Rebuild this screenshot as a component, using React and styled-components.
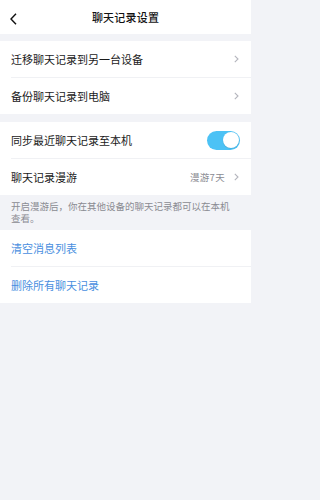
import styled, { createGlobalStyle } from "styled-components";

const GlobalStyle = createGlobalStyle`
  html, body {
    margin: 0;
    padding: 0;
    background: #f2f3f7;
    font-family: "Noto Sans CJK SC", "Noto Sans", sans-serif;
  }
`;

const sections = [
  {
    gap: 7,
    rows: [
      { label: "迁移聊天记录到另一台设备", arrow: true },
      { label: "备份聊天记录到电脑", arrow: true },
    ],
  },
  {
    gap: 8,
    rows: [
      { label: "同步最近聊天记录至本机", toggle: true },
      { label: "聊天记录漫游", value: "漫游7天", arrow: true },
    ],
    note: "开启漫游后，你在其他设备的聊天记录都可以在本机查看。",
  },
  {
    gap: 0,
    rows: [
      { label: "清空消息列表", link: true },
      { label: "删除所有聊天记录", link: true },
    ],
  },
];

function Chevron() {
  return (
    <Arrow width="5" height="8" viewBox="0 0 5 8">
      <path d="M0.8 0.8 L4 4 L0.8 7.2" fill="none" stroke="#b4b5bd" strokeWidth="1.1" />
    </Arrow>
  );
}

export default function App() {
  return (
    <>
      <GlobalStyle />
      <Page>
        <Header>
          <BackButton width="7" height="12" viewBox="0 0 7 12">
            <path d="M6 0.8 L1 6 L6 11.2" fill="none" stroke="#111" strokeWidth="1.4" />
          </BackButton>
          <Title>聊天记录设置</Title>
        </Header>

        {sections.map((section, i) => (
          <Section key={i} $gap={section.gap}>
            <Group>
              {section.rows.map((row) => (
                <Row key={row.label}>
                  <Label $link={row.link}>{row.label}</Label>
                  <Right>
                    {row.value && <Value>{row.value}</Value>}
                    {row.arrow && <Chevron />}
                    {row.toggle && (
                      <Toggle>
                        <Knob />
                      </Toggle>
                    )}
                  </Right>
                </Row>
              ))}
            </Group>
            {section.note && <Note>{section.note}</Note>}
          </Section>
        ))}
      </Page>
    </>
  );
}

const Page = styled.div`
  width: 251px;
  min-height: 500px;
  background: #f2f3f7;
`;

const Header = styled.div`
  height: 34px;
  background: #fff;
  display: flex;
  align-items: center;
  justify-content: center;
  position: relative;
`;

// back arrow sits over the centred title bar
const BackButton = styled.svg`
  position: absolute;
  left: 10px;
  top: 13px;
`;

const Title = styled.div`
  font-size: 11px;
  font-weight: 500;
  color: #111;
  letter-spacing: 0.2px;
`;

const Section = styled.div`
  padding-top: ${(p) => p.$gap}px;
`;

const Group = styled.div`
  background: #fff;
`;

const Row = styled.div`
  height: 36px;
  display: flex;
  align-items: center;
  justify-content: space-between;
  margin-left: 11px;
  padding-right: 11px;
  & + & {
    border-top: 1px solid #f0f1f4;
  }
`;

const Label = styled.span`
  font-size: 11px;
  color: ${(p) => (p.$link ? "#4a8fe0" : "#1a1a1a")};
`;

const Right = styled.div`
  display: flex;
  align-items: center;
  gap: 9px;
`;

const Value = styled.span`
  font-size: 9.5px;
  color: #8a8b92;
  letter-spacing: 0.3px;
`;

const Arrow = styled.svg`
  display: block;
  margin-right: 1px;
`;

const Toggle = styled.div`
  width: 33px;
  height: 19px;
  border-radius: 10px;
  background: #4cc2f5;
  display: flex;
  align-items: center;
  justify-content: flex-end;
  padding: 0 1.5px;
  box-sizing: border-box;
`;

const Knob = styled.div`
  width: 16px;
  height: 16px;
  border-radius: 50%;
  background: #fff;
  box-shadow: 0 0.5px 1px rgba(0, 0, 0, 0.15);
`;

const Note = styled.div`
  padding: 5px 20px 6px 11px;
  font-size: 9.5px;
  line-height: 12px;
  color: #8a8b92;
`;
